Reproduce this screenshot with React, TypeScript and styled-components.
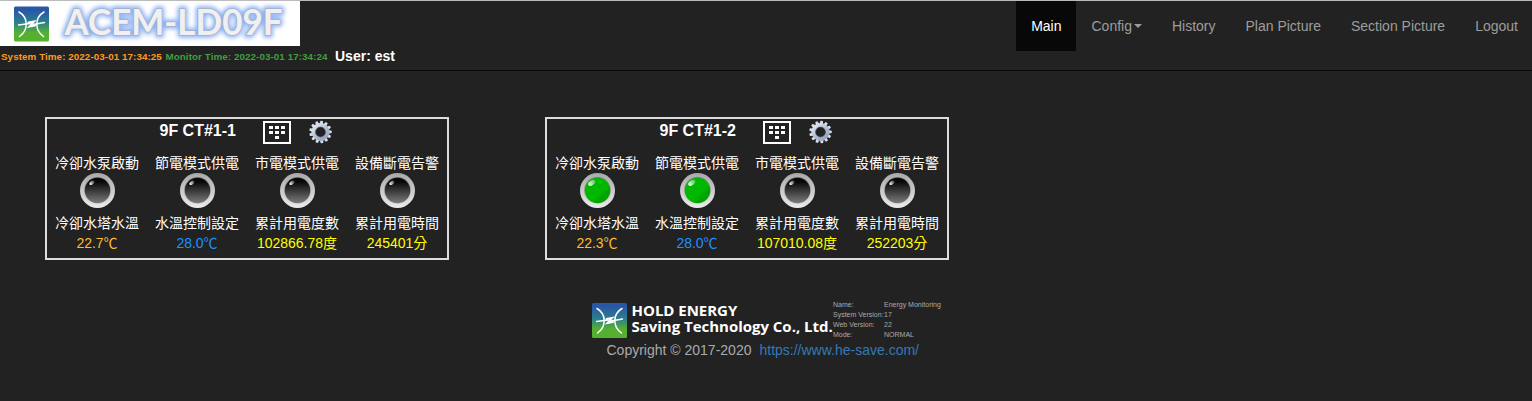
import React from "react";
import styled, { createGlobalStyle } from "styled-components";

const Global = createGlobalStyle`
  * { box-sizing: border-box; }
  body {
    margin: 0;
    background: #222;
    color: #fff;
    font: 14px/20px "Liberation Sans", "Noto Sans CJK TC", sans-serif;
  }
`;

const Page = styled.div`
  height: 401px;
  overflow: hidden;
  border-top: 1px solid #bbb;
`;
const Header = styled.header`
  display: flex;
  justify-content: space-between;
  align-items: flex-start;
  height: 70px;
  border-bottom: 1px solid #080808;
`;
const Brand = styled.div`
  display: flex;
  flex-direction: column;
`;
const Banner = styled.svg`
  display: block;
  width: 300px;
  height: 45px;
  background: #fff;
`;
const Status = styled.div`
  display: flex;
  align-items: flex-start;
  height: 20px;
  padding-left: 1px;
  font-weight: bold;
  white-space: pre;
`;
const Stamp = styled.span<{ $color: string; $width: number }>`
  width: ${(p) => p.$width}px;
  font-size: 9.8px;
  letter-spacing: 0.08px;
  line-height: 21px;
  color: ${(p) => p.$color};
`;
const User = styled.span`
  font-size: 14px;
`;
const Nav = styled.nav`
  display: flex;
  margin-right: -1px;
`;
const NavItem = styled.a<{ $active?: boolean }>`
  display: flex;
  align-items: center;
  height: 50px;
  padding: 0 15px;
  color: ${(p) => (p.$active ? "#fff" : "#9d9d9d")};
  background: ${(p) => (p.$active ? "#080808" : "transparent")};
`;
const Caret = styled.span`
  margin-left: 2px;
  border-top: 4px solid;
  border-left: 4px solid transparent;
  border-right: 4px solid transparent;
`;
const Main = styled.main`
  display: flex;
  gap: 96px;
  padding: 46px 45px 0;
`;
const Panel = styled.section`
  width: 404px;
  height: 143px;
  border: 2px solid #ddd;
`;
const PanelHead = styled.div`
  display: flex;
  align-items: flex-start;
  height: 34px;
  padding: 1px 0 0 112.5px;
`;
const Title = styled.h2`
  width: 103.5px;
  margin: 0;
  font-size: 16px;
  line-height: 22px;
`;
const KeypadSvg = styled.svg`
  margin: 1px 17px 0 0;
`;
const Columns = styled.div`
  display: grid;
  grid-template-columns: repeat(4, 100px);
`;
const Cell = styled.div`
  display: flex;
  flex-direction: column;
  align-items: center;
  white-space: nowrap;
`;
const LampSvg = styled.svg`
  margin-bottom: 5px;
`;
const Value = styled.span<{ $color: string }>`
  color: ${(p) => p.$color};
`;
const Footer = styled.footer`
  display: flex;
  flex-direction: column;
  margin: 39px 0 0 592px;
`;
const FooterTop = styled.div`
  display: flex;
  height: 41px;
`;
const Mark = styled.svg`
  margin-top: 4px;
`;
const Company = styled.div`
  width: 206px;
  padding: 3px 0 0 4.5px;
  font: bold 15px/16px "Open Sans", "Noto Sans", sans-serif;
  white-space: nowrap;
`;
const Line = styled.div<{ $spacing: number }>`
  letter-spacing: ${(p) => p.$spacing}px;
`;
const Info = styled.dl`
  display: grid;
  grid-template-columns: 51px auto;
  grid-auto-rows: 10px;
  margin: 0;
  padding-top: 1px;
  font-size: 7px;
  line-height: 10px;
  color: #aaa;
  white-space: nowrap;
`;
const InfoItem = styled.span``;
const Copyright = styled.div`
  padding-left: 14.5px;
  color: #aaa;
  white-space: pre;
`;
const Link = styled.a`
  margin-left: 8px;
  color: #337ab7;
`;

const Logo = () => (
  <>
    <rect width="35" height="35" rx="1.5" fill="url(#brand)" />
    <g fill="none" stroke="#fff" strokeLinecap="round">
      <path d="M5 5.5C14.5 11 14.5 24 5.5 30M30 5.5C20.5 11 20.5 24 29.5 30" strokeWidth="1.5" />
      <path d="M4.5 18.5L16 17M19 18L30.5 16" strokeWidth="1.3" />
      <path d="M14.5 16L20 15L15.5 20L21 19" strokeWidth="2" />
    </g>
  </>
);

const Lamp = ({ on }: { on: boolean }) => (
  <LampSvg width="35" height="35" viewBox="0 0 35 35">
    <circle cx="17.5" cy="17.5" r="17.5" fill="url(#rim)" />
    <circle cx="17.5" cy="17.5" r="13.6" fill="url(#bevel)" />
    <circle cx="17.5" cy="17.5" r="12.7" fill={on ? "url(#lit)" : "url(#unlit)"} />
    <ellipse cx="11.8" cy="9.8" rx={on ? 4 : 2.8} ry={on ? 2.3 : 1.7} transform="rotate(-35 11.8 9.8)" fill="url(#shine)" />
  </LampSvg>
);

const Keypad = () => (
  <KeypadSvg width="28" height="23" viewBox="0 0 28 23">
    <rect x="1" y="1" width="26" height="21" fill="none" stroke="#fff" strokeWidth="2" />
    <path fill="#fff" d="M6 5h4v3H6zM12 5h4v3h-4zM18 5h4v3h-4zM6 10h4v3H6zM12 10h4v3h-4zM18 10h4v3h-4zM12 15h4v3h-4z" />
  </KeypadSvg>
);

const Gear = () => (
  <svg width="24" height="24" viewBox="-12.5 -12 24 24">
    <g fill="url(#steel)">
      {Array.from({ length: 13 }, (_, i) => (
        <path key={i} d="M-2 -7.5L-1.1 -11.2H1.2L1.9 -7.5Z" transform={`rotate(${(i * 360) / 13 + 6})`} />
      ))}
    </g>
    <circle r="7" fill="none" stroke="url(#steel)" strokeWidth="3.9" />
    <circle r="5" fill="none" stroke="#4d5b70" strokeWidth=".6" />
  </svg>
);

const units = [
  { name: "9F CT#1-1", lamps: [false, false, false, false], values: ["22.7℃", "28.0℃", "102866.78度", "245401分"] },
  { name: "9F CT#1-2", lamps: [true, true, false, false], values: ["22.3℃", "28.0℃", "107010.08度", "252203分"] },
];
const states = ["冷卻水泵啟動", "節電模式供電", "市電模式供電", "設備斷電告警"];
const metrics = ["冷卻水塔水溫", "水溫控制設定", "累計用電度數", "累計用電時間"];
const colors = ["#fb3", "#1e90ff", "#ff0", "#ff0"];
const info = ["Name:", "Energy Monitoring", "System Version:", "17", "Web Version:", "22", "Mode:", "NORMAL"];

export default function App() {
  return (
    <Page>
      <Global />
      <Header>
        <Brand>
          <Banner viewBox="0 0 300 45">
            <defs>
              <linearGradient id="brand" x2="0" y2="1">
                <stop offset=".1" stopColor="#2857a8" />
                <stop offset=".45" stopColor="#2c7f8c" />
                <stop offset=".75" stopColor="#55b030" />
              </linearGradient>
              <linearGradient id="rim" x2="0" y2="1">
                <stop stopColor="#a8a8a8" />
                <stop offset="1" stopColor="#ececec" />
              </linearGradient>
              <linearGradient id="bevel" x2="0" y2="1">
                <stop stopColor="#777" />
                <stop offset="1" stopColor="#d8d8d8" />
              </linearGradient>
              <linearGradient id="unlit" x2="0" y2="1">
                <stop offset=".15" stopColor="#080808" />
                <stop offset="1" stopColor="#7c7c7c" />
              </linearGradient>
              <linearGradient id="lit" x2="1" y2="1">
                <stop offset=".6" stopColor="#00b800" />
                <stop offset=".75" stopColor="#00a000" />
                <stop offset="1" stopColor="#00b000" />
              </linearGradient>
              <linearGradient id="shine" x2="1" y2="0">
                <stop stopColor="#fff" />
                <stop offset="1" stopColor="#fff" stopOpacity=".25" />
              </linearGradient>
              <linearGradient id="steel" gradientUnits="userSpaceOnUse" x1="-8" y1="-10" x2="8" y2="10">
                <stop stopColor="#f1f5fa" />
                <stop offset=".5" stopColor="#b4c0d2" />
                <stop offset="1" stopColor="#8495b2" />
              </linearGradient>
              <filter id="glow" x="-10%" y="-40%" width="120%" height="180%">
                <feGaussianBlur stdDeviation="1.9" />
              </filter>
            </defs>
            <g transform="translate(14 5.5)"><Logo /></g>
            <g fontFamily="Lato, sans-serif" fontSize="35.5" fontWeight="bold" strokeLinejoin="round">
              <text x="64.5" y="34.2" textLength="218" lengthAdjust="spacingAndGlyphs" fill="#8fb4f5" stroke="#8fb4f5" strokeWidth="5.5" filter="url(#glow)">ACEM-LD09F</text>
              <text x="64.5" y="34.2" textLength="218" lengthAdjust="spacingAndGlyphs" fill="#f0f0f2" stroke="#a9b1c2" strokeWidth="1.4">ACEM-LD09F</text>
              <text x="64.5" y="34.2" textLength="218" lengthAdjust="spacingAndGlyphs" fill="#f0f0f2">ACEM-LD09F</text>
            </g>
          </Banner>
          <Status>
            <Stamp $color="#ff9a1f" $width={164.5}>System Time: 2022-03-01 17:34:25</Stamp>
            <Stamp $color="#3f9f3f" $width={169.5}>Monitor Time: 2022-03-01 17:34:24</Stamp>
            <User>User: est</User>
          </Status>
        </Brand>
        <Nav>
          <NavItem $active>Main</NavItem>
          <NavItem>Config<Caret /></NavItem>
          <NavItem>History</NavItem>
          <NavItem>Plan Picture</NavItem>
          <NavItem>Section Picture</NavItem>
          <NavItem>Logout</NavItem>
        </Nav>
      </Header>
      <Main>
        {units.map((u) => (
          <Panel key={u.name}>
            <PanelHead>
              <Title>{u.name}</Title>
              <Keypad />
              <Gear />
            </PanelHead>
            <Columns>
              {states.map((s, i) => (
                <Cell key={s}>
                  <span>{s}</span>
                  <Lamp on={u.lamps[i]} />
                  <span>{metrics[i]}</span>
                  <Value $color={colors[i]}>{u.values[i]}</Value>
                </Cell>
              ))}
            </Columns>
          </Panel>
        ))}
      </Main>
      <Footer>
        <FooterTop>
          <Mark width="35" height="35" viewBox="0 0 35 35"><Logo /></Mark>
          <Company>
            <Line $spacing={-0.02}>HOLD ENERGY</Line>
            <Line $spacing={-0.02}>Saving Technology Co., Ltd.</Line>
          </Company>
          <Info>
            {info.map((t) => <InfoItem key={t}>{t}</InfoItem>)}
          </Info>
        </FooterTop>
        <Copyright>Copyright © 2017-2020<Link>https://www.he-save.com/</Link></Copyright>
      </Footer>
    </Page>
  );
}
